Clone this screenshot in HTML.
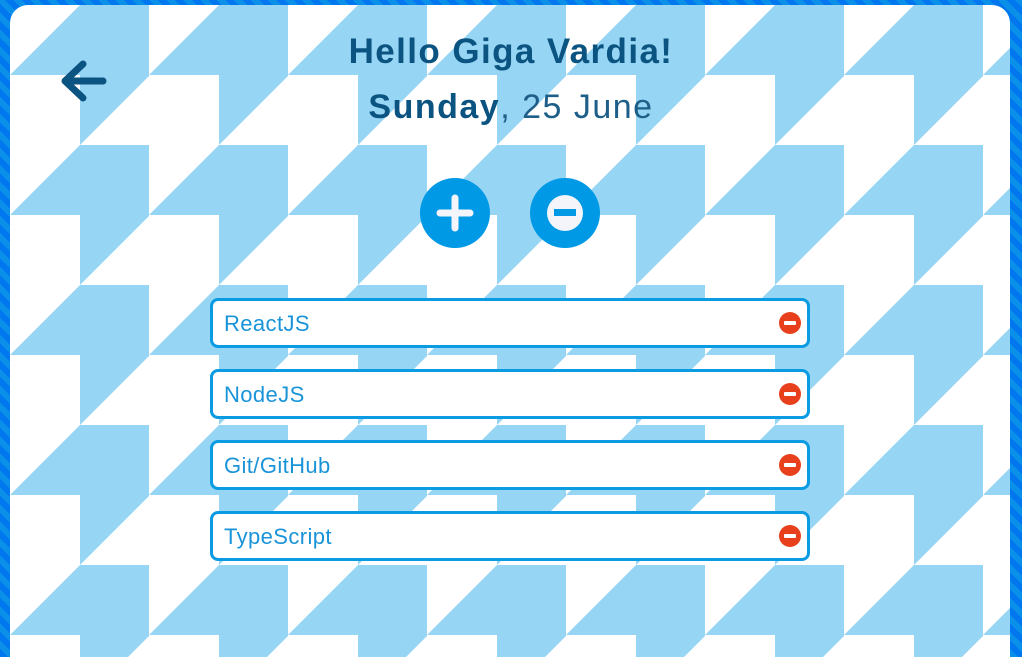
<!DOCTYPE html>
<html><head><meta charset="utf-8"><style>
html,body{margin:0;padding:0;width:1022px;height:657px;overflow:hidden;font-family:"Liberation Sans",sans-serif}
body{background:repeating-linear-gradient(45deg,#0077ee 0 6px,#0a90e8 6px 12px);position:relative}
.card{position:absolute;left:10px;top:5px;width:1000px;height:652px;border-radius:18px 18px 0 0;overflow:hidden;background:#fff}
.card svg.bg{position:absolute;left:0;top:0}
.t1{position:absolute;left:0;width:1022px;top:32px;text-align:center;font-size:35px;font-weight:bold;color:#0b5380;letter-spacing:1.4px}
.t2{position:absolute;left:0;width:1022px;top:88px;text-align:center;font-size:34px;color:#0b5380;letter-spacing:1.5px}
.t2 span{font-weight:300;color:#1d5f88}
.btn{position:absolute;width:70px;height:70px;border-radius:50%;background:#0099e6;top:178px}
.item{position:absolute;left:210px;width:594px;height:44px;border:3px solid #0a9be3;border-radius:8px;background:#fff;font-size:22px;color:#1a94d8;line-height:46px;letter-spacing:0.4px}
.item .tx{position:absolute;left:11px;top:0}
.item .rm{position:absolute;right:6px;top:11px;width:22px;height:22px;border-radius:50%;background:#e8401c}
.item .rm:after{content:"";position:absolute;left:5px;top:9px;width:12px;height:4px;background:#fff;border-radius:1px}
</style></head><body>
<div class="card">
<svg class="bg" width="1000" height="652" viewBox="0 0 1000 652">
<defs><pattern id="p" x="0" y="0" width="139" height="140" patternUnits="userSpaceOnUse">
<polygon points="70,0 140,0 140,70 70,140 70,70 0,70" fill="#97d5f4"/>
</pattern></defs>
<rect width="1000" height="652" fill="url(#p)"/>
</svg>
</div>
<svg style="position:absolute;left:58px;top:58px" width="50" height="46" viewBox="0 0 50 46">
<path d="M25 6 L7 23 L25 40 M7 23 L45 23" stroke="#0b5380" stroke-width="7" fill="none" stroke-linecap="round" stroke-linejoin="round"/>
</svg>
<div class="t1">Hello Giga Vardia!</div>
<div class="t2"><b>Sunday</b><span>, 25 June</span></div>
<div class="btn" style="left:420px">
<svg width="70" height="70" viewBox="0 0 70 70"><path d="M35 20V50M20 35H50" stroke="#f3f5fa" stroke-width="7" stroke-linecap="round"/></svg>
</div>
<div class="btn" style="left:530px">
<svg width="70" height="70" viewBox="0 0 70 70"><circle cx="35" cy="35" r="18" fill="#f3f5fa"/><rect x="24" y="31" width="22" height="7" fill="#0099e6"/></svg>
</div>
<div class="item" style="top:298px"><span class="tx">ReactJS</span><span class="rm"></span></div>
<div class="item" style="top:369px"><span class="tx">NodeJS</span><span class="rm"></span></div>
<div class="item" style="top:440px"><span class="tx">Git/GitHub</span><span class="rm"></span></div>
<div class="item" style="top:511px"><span class="tx">TypeScript</span><span class="rm"></span></div>
</body></html>
